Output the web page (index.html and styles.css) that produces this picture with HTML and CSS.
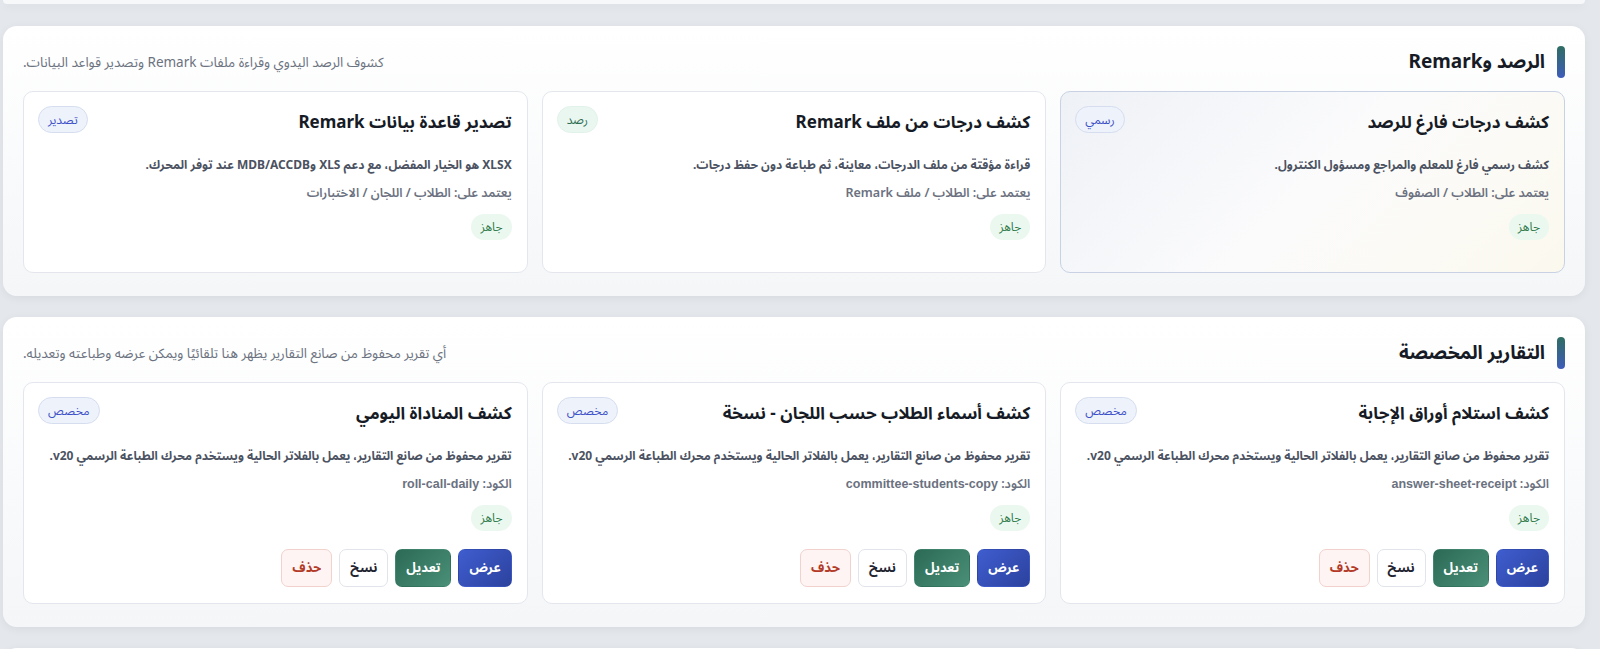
FILE: index.html
```html
<!DOCTYPE html>
<html lang="ar" dir="rtl">
<head>
    <meta charset="UTF-8">
    <meta name="viewport" content="width=device-width, initial-scale=1.0">
    <title>التقارير</title>
    <link rel="stylesheet" href="styles.css">
</head>
<body>
    <div class="page">
        <div class="panel stub"></div>

        <section class="panel">
            <div class="panel-head">
                <h2 class="panel-title"><span class="bar"></span>الرصد وRemark</h2>
                <p class="panel-sub">كشوف الرصد اليدوي وقراءة ملفات Remark وتصدير قواعد البيانات.</p>
            </div>
            <div class="cards">
                <div class="card active">
                    <div class="card-head">
                        <h3>كشف درجات فارغ للرصد</h3>
                        <span class="tag">رسمي</span>
                    </div>
                    <p class="desc">كشف رسمي فارغ للمعلم والمراجع ومسؤول الكنترول.</p>
                    <p class="meta">يعتمد على: الطلاب / الصفوف</p>
                    <span class="status">جاهز</span>
                </div>
                <div class="card">
                    <div class="card-head">
                        <h3>كشف درجات من ملف Remark</h3>
                        <span class="tag green">رصد</span>
                    </div>
                    <p class="desc">قراءة مؤقتة من ملف الدرجات، معاينة، ثم طباعة دون حفظ درجات.</p>
                    <p class="meta">يعتمد على: الطلاب / ملف Remark</p>
                    <span class="status">جاهز</span>
                </div>
                <div class="card">
                    <div class="card-head">
                        <h3>تصدير قاعدة بيانات Remark</h3>
                        <span class="tag">تصدير</span>
                    </div>
                    <p class="desc">XLSX هو الخيار المفضل، مع دعم XLS وMDB/ACCDB عند توفر المحرك.</p>
                    <p class="meta">يعتمد على: الطلاب / اللجان / الاختبارات</p>
                    <span class="status">جاهز</span>
                </div>
            </div>
        </section>

        <section class="panel">
            <div class="panel-head">
                <h2 class="panel-title"><span class="bar"></span>التقارير المخصصة</h2>
                <p class="panel-sub">أي تقرير محفوظ من صانع التقارير يظهر هنا تلقائيًا ويمكن عرضه وطباعته وتعديله.</p>
            </div>
            <div class="cards">
                <div class="card">
                    <div class="card-head">
                        <h3>كشف استلام أوراق الإجابة</h3>
                        <span class="tag">مخصص</span>
                    </div>
                    <p class="desc">تقرير محفوظ من صانع التقارير، يعمل بالفلاتر الحالية ويستخدم محرك الطباعة الرسمي v20.</p>
                    <p class="meta">الكود: <span class="code">answer-sheet-receipt</span></p>
                    <span class="status">جاهز</span>
                    <div class="actions">
                        <button class="btn view">عرض</button>
                        <button class="btn edit">تعديل</button>
                        <button class="btn copy">نسخ</button>
                        <button class="btn del">حذف</button>
                    </div>
                </div>
                <div class="card">
                    <div class="card-head">
                        <h3>كشف أسماء الطلاب حسب اللجان - نسخة</h3>
                        <span class="tag">مخصص</span>
                    </div>
                    <p class="desc">تقرير محفوظ من صانع التقارير، يعمل بالفلاتر الحالية ويستخدم محرك الطباعة الرسمي v20.</p>
                    <p class="meta">الكود: <span class="code">committee-students-copy</span></p>
                    <span class="status">جاهز</span>
                    <div class="actions">
                        <button class="btn view">عرض</button>
                        <button class="btn edit">تعديل</button>
                        <button class="btn copy">نسخ</button>
                        <button class="btn del">حذف</button>
                    </div>
                </div>
                <div class="card">
                    <div class="card-head">
                        <h3>كشف المناداة اليومي</h3>
                        <span class="tag">مخصص</span>
                    </div>
                    <p class="desc">تقرير محفوظ من صانع التقارير، يعمل بالفلاتر الحالية ويستخدم محرك الطباعة الرسمي v20.</p>
                    <p class="meta">الكود: <span class="code">roll-call-daily</span></p>
                    <span class="status">جاهز</span>
                    <div class="actions">
                        <button class="btn view">عرض</button>
                        <button class="btn edit">تعديل</button>
                        <button class="btn copy">نسخ</button>
                        <button class="btn del">حذف</button>
                    </div>
                </div>
            </div>
        </section>

        <div class="panel"></div>
    </div>
</body>
</html>
```

FILE: styles.css
```css
body {
    margin: 0;
    padding: 0;
    font-family: "Noto Sans", "Noto Sans Arabic", "DejaVu Sans", sans-serif;
    background-color: #e4e7eb;
    color: #111827;
    overflow: hidden;
}

.page {
    display: flex;
    flex-direction: column;
    gap: 21px;
    padding: 0 15px 0 3px;
}

.panel {
    background: linear-gradient(180deg, #ffffff 0%, #f4f6f8 100%);
    border-radius: 14px;
    box-shadow: 0 2px 10px rgba(15, 23, 42, 0.06);
    padding: 20px 20px 23px;
}

.panel.stub {
    height: 4px;
    padding: 0;
    margin-bottom: 1px;
    border-radius: 0 0 14px 14px;
    background: #f6f8fa;
}

.panel-head {
    display: flex;
    align-items: center;
    justify-content: space-between;
    margin-bottom: 13px;
}

.panel-title {
    display: flex;
    align-items: center;
    gap: 12px;
    margin: 0;
    font-size: 19px;
    font-weight: 700;
    color: #161b26;
    height: 32px;
}

.bar {
    width: 8px;
    height: 32px;
    border-radius: 5px;
    background: linear-gradient(180deg, #2f6d62, #3e5cba);
}

.panel-sub {
    margin: 0;
    font-size: 13.5px;
    color: #6b7280;
}

.cards {
    display: grid;
    grid-template-columns: repeat(3, 1fr);
    gap: 14px;
}

.card {
    display: flex;
    flex-direction: column;
    align-items: flex-start;
    background-color: #ffffff;
    border: 1px solid #e3e7ed;
    border-radius: 10px;
    padding: 14px 15px 16px 14px;
    min-height: 182px;
    box-sizing: border-box;
}

.card.active {
    background: linear-gradient(135deg, #eef1f6 0%, #fbfbfc 50%, #fbf9ee 100%);
    border-color: #c8d2e4;
}

.card-head {
    display: flex;
    justify-content: space-between;
    align-items: flex-start;
    width: 100%;
}

.card-head h3 {
    margin: 2px 0 0;
    font-size: 17px;
    line-height: 28px;
    font-weight: 700;
    color: #161b26;
}

.tag {
    padding: 3px 9px;
    border-radius: 999px;
    font-size: 12px;
    line-height: 19px;
    color: #3c50c8;
    background-color: #eef2fb;
    border: 1px solid #d5ddef;
}

.tag.green {
    color: #2e6e52;
    background-color: #eaf7f1;
    border-color: #e1f2ea;
}

.desc {
    margin: 18px 0 0;
    font-size: 12px;
    line-height: 22px;
    font-weight: 700;
    color: #4b5262;
    white-space: nowrap;
}

.meta {
    margin: 6px 0 0;
    font-size: 12.5px;
    line-height: 22px;
    font-weight: 600;
    color: #6b7180;
}

.code {
    font-family: "Liberation Sans", "Noto Sans", sans-serif;
    font-weight: 700;
    direction: ltr;
}

.status {
    margin-top: 10px;
    padding: 3px 9px;
    border-radius: 999px;
    font-size: 12px;
    line-height: 20px;
    color: #2f7a4a;
    background-color: #ebf8ef;
}

.actions {
    display: flex;
    gap: 7px;
    margin-top: 18px;
}

.btn {
    font-family: inherit;
    font-size: 13px;
    font-weight: 700;
    height: 38px;
    padding: 0 10px;
    border-radius: 7px;
    border: 1px solid transparent;
    cursor: pointer;
}

.btn.view {
    color: #ffffff;
    background: linear-gradient(135deg, #3f5dcf, #2c429e);
}

.btn.edit {
    color: #ffffff;
    background: linear-gradient(135deg, #2c6b56, #4a8f78);
}

.btn.copy {
    color: #1f2430;
    background-color: #ffffff;
    border-color: #e1e4ea;
}

.btn.del {
    color: #b23a27;
    background-color: #fdf4f3;
    border-color: #f2d2cd;
}
```
